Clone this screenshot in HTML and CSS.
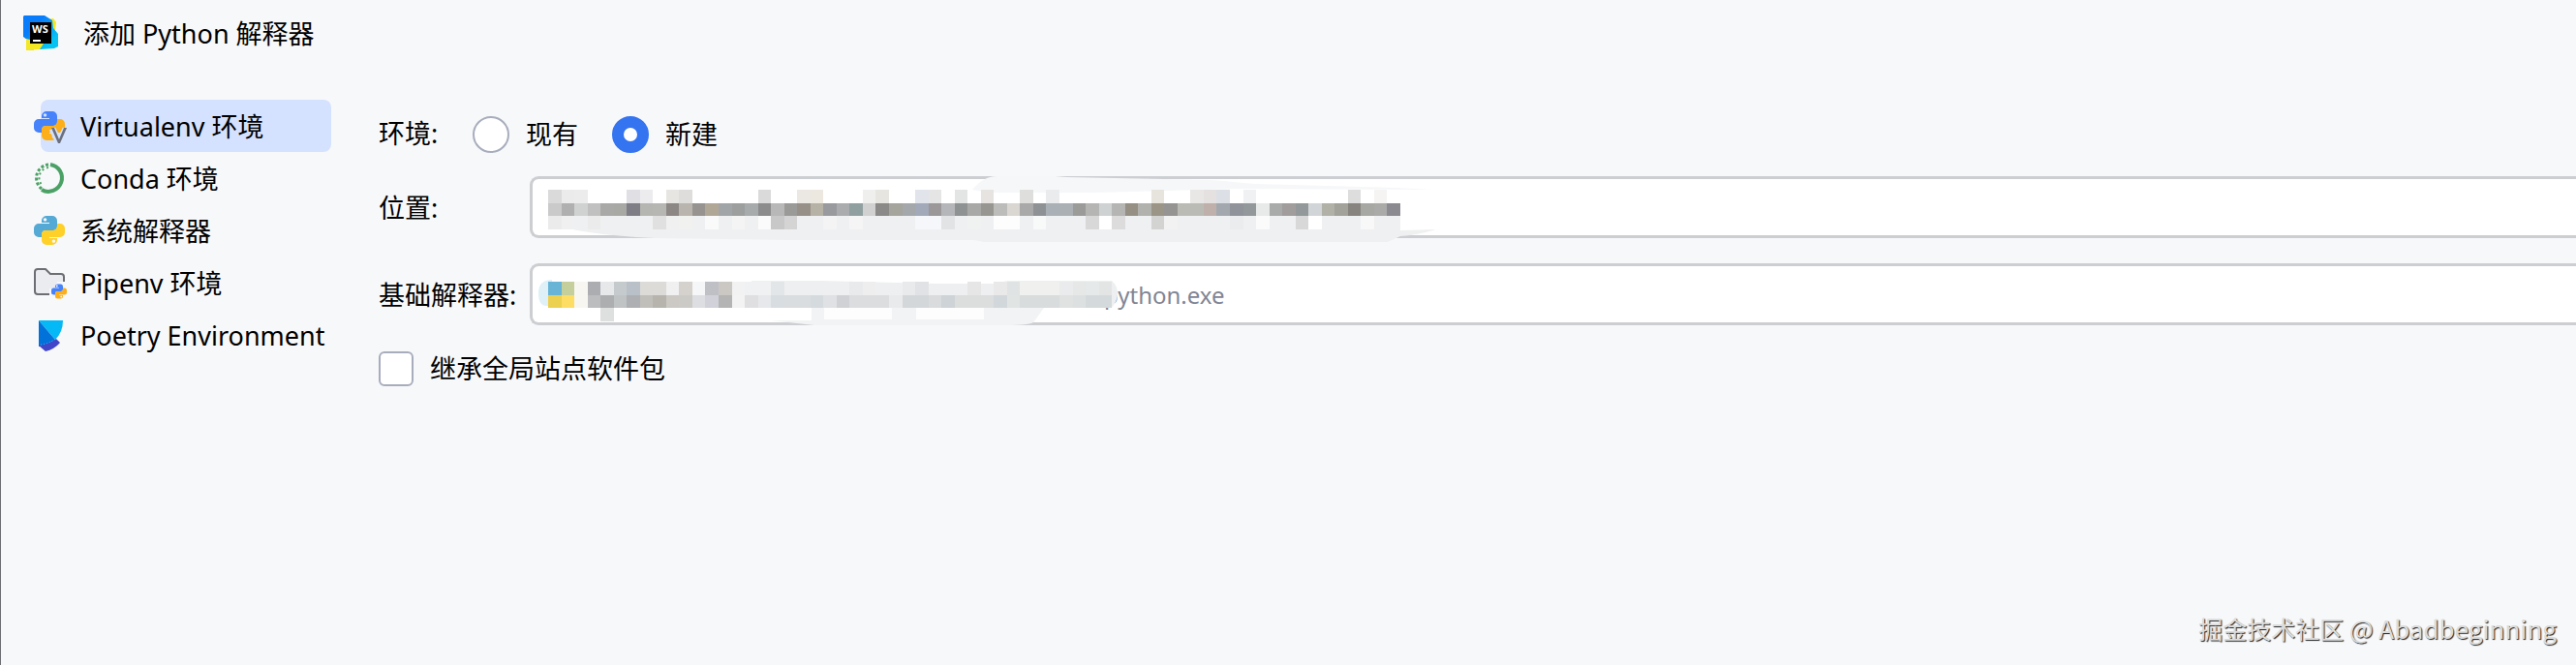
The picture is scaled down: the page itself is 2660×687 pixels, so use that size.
FILE: index.html
```
<!DOCTYPE html>
<html lang="zh-CN">
<head>
    <meta charset="UTF-8">
    <meta name="viewport" content="width=device-width, initial-scale=1.0">
    <title>添加 Python 解释器</title>
    <link rel="stylesheet" href="styles.css">
</head>
<body>
    <!-- Shared icon shapes -->
    <svg class="defs" width="0" height="0" aria-hidden="true">
        <defs>
            <path id="snake" fill-rule="evenodd" d="M8 6a5 5 0 0 1 5-5h6a5 5 0 0 1 5 5v6a4 4 0 0 1-4 4h-8a5 5 0 0 0-4 5v2H5a5 5 0 0 1-5-5v-4a5 5 0 0 1 5-5h11V8H8zM11.500 3.200a1.700 1.700 0 1 0 .1 0z"/>
        </defs>
    </svg>

    <header class="title-bar">
        <svg class="app-icon" viewBox="0 0 36 36">
            <defs>
                <linearGradient id="ws-blue" x1="0" y1="0" x2="1" y2="1">
                    <stop offset="0.3" stop-color="#087cfa"/>
                    <stop offset="0.8" stop-color="#07c3f2"/>
                </linearGradient>
            </defs>
            <path fill="#f4e724" d="M26 4l5-1 3 4-1 8-24 21H3V24l9-10z"/>
            <path fill="#d5e533" d="M3 25l8 3v8H3z"/>
            <path fill="url(#ws-blue)" d="M0 1l1-1h21l8 5 1 8 5 6v13l-4 2-15 1-5-4L0 22z"/>
            <path fill="#f4e724" d="M3 24l4 1v4h14l-4 6-14 1z"/>
            <rect x="7" y="7" width="22" height="22"/>
            <text x="9" y="18" class="ws">WS</text>
            <rect x="10" y="25" width="8" height="2" fill="#fff"/>
        </svg>
        <h1>添加 Python 解释器</h1>
    </header>

    <main class="dialog">
        <nav class="env-list">
            <a href="#virtualenv" class="env active">
                <svg viewBox="0 0 34 34">
                    <use href="#snake" fill="#4682fa"/>
                    <use href="#snake" fill="#fcaf1b" transform="rotate(180 16 16)"/>
                    <path d="M19 19l7 14 7-14" fill="none" stroke="#d4e2ff" stroke-width="7"/>
                    <path d="M18 18h3l5 12 5-12h3l-7 16h-2z" fill="#6c707e"/>
                </svg>
                Virtualenv 环境
            </a>
            <a href="#conda" class="env">
                <svg viewBox="0 0 34 34">
                    <g fill="none" stroke="#4ba165">
                        <path d="M17 2a14 14 0 1 1-9 26" stroke-width="4"/>
                        <path d="M15 2a14 14 0 0 0-7 25" stroke-width="3" stroke-dasharray="3 2"/>
                        <path d="M15 5a11 11 0 0 0-6 19" stroke-width="2" stroke-dasharray="2 3"/>
                    </g>
                </svg>
                Conda 环境
            </a>
            <a href="#system" class="env">
                <svg viewBox="0 0 34 34">
                    <use href="#snake" fill="#54a9d5"/>
                    <use href="#snake" fill="#ffd028" transform="rotate(180 16 16)"/>
                </svg>
                系统解释器
            </a>
            <a href="#pipenv" class="env">
                <svg viewBox="0 0 34 34">
                    <path d="M16 28H4a3 3 0 0 1-3-3V5a3 3 0 0 1 3-3h8l5 5h11a3 3 0 0 1 3 3v5" fill="#ebecf0" stroke="#6c6e73" stroke-width="2"/>
                    <path d="M24 15h10v19H16V22h6z" fill="#f7f8fa"/>
                    <g transform="translate(18 17) scale(.5)">
                        <use href="#snake" fill="#4682fa"/>
                        <use href="#snake" fill="#fcaf1b" transform="rotate(180 16 16)"/>
                    </g>
                </svg>
                Pipenv 环境
            </a>
            <a href="#poetry" class="env">
                <svg viewBox="0 0 34 34">
                    <path d="M5 1h25q0 12-8 20z" fill="#04b9f6"/>
                    <path d="M5 1l17 20q-7 6-17 7z" fill="#0072d9"/>
                    <path d="M5 27q10-1 18-7l4 4q-6 7-15 9z" fill="#4145c8"/>
                    <path d="M7 26q9-1 15-6" fill="none" stroke="#6fa9f0" stroke-dasharray="1 2"/>
                </svg>
                Poetry Environment
            </a>
        </nav>

        <form class="settings">
            <div class="row radios" role="radiogroup" aria-labelledby="env-label">
                <span id="env-label" class="radio-title">环境:</span>
                <label class="choice"><input type="radio" name="env" value="existing">现有</label>
                <label class="choice"><input type="radio" name="env" value="new" checked>新建</label>
            </div>
            <div class="row">
                <label for="location">位置:</label>
                <div class="field">
                    <input type="text" id="location">
                    <svg class="smudge" viewBox="0 0 920 68" aria-hidden="true">
                        <path fill="#eff0f1" d="M0 29h880v27l37-1q-20 6-37 7l-13 6H450l-10-2H250L110 64Q30 60 0 48z"/>
                        <path fill="#f6f7f8" d="M438 14q12-14 25-14h60l12 1 150 3 46 4 146 4 37 2-200-1-150 4H455z"/>
                    </svg>
                    <svg class="mosaic" id="location-mosaic" viewBox="0 0 65 3" preserveAspectRatio="none" aria-hidden="true"></svg>
                </div>
            </div>
            <div class="row">
                <label for="base">基础解释器:</label>
                <div class="field">
                    <select id="base">
                        <option>python.exe</option>
                    </select>
                    <svg class="smudge" viewBox="0 0 920 68" aria-hidden="true">
                        <path fill="#dff0f7" d="M4 17q-14 0-14 14t10 13h6z"/>
                        <path fill="#eeeff0" d="M210 18h70l120 3h60l15-3h107q6 5 6 13t-6 15H210z"/>
                        <path fill="#f2f3f4" d="M272 46h240l-10 14q-2 4-30 4H275l-45-5h42z"/>
                        <path fill="#fdfdfd" d="M285 45h70v13h-70zM380 45h70v13h-70z"/>
                    </svg>
                    <svg class="mosaic" id="base-mosaic" viewBox="0 0 65 3" preserveAspectRatio="none" aria-hidden="true"></svg>
                </div>
            </div>
            <label class="choice inherit"><input type="checkbox">继承全局站点软件包</label>
        </form>
    </main>

    <footer class="credit">掘金技术社区 <span>@ Abadbeginning</span></footer>
    <script src="script.js"></script>
</body>
</html>
```
FILE: styles.css
```
* {
    box-sizing: border-box;
}
body {
    margin: 0;
    min-height: 100vh;
    position: relative;
    overflow-x: hidden;
    background-color: #f7f8fa;
    border-left: 1px solid #6e6f73;
    font-family: "Noto Sans", "Noto Sans CJK SC", sans-serif;
    font-size: 27px;
    line-height: 36px;
    color: #000;
}
.defs {
    position: absolute;
}

/* Title bar */
.title-bar {
    display: flex;
    align-items: center;
    gap: 26px;
    height: 68px;
    padding-left: 23px;
}
.title-bar h1 {
    margin: 0;
    padding-top: 2px;
    font-size: 27px;
    font-weight: normal;
}
.app-icon {
    width: 36px;
    height: 36px;
}
.ws {
    font: bold 11px "Open Sans", sans-serif;
    fill: #fff;
}

.dialog {
    display: flex;
    padding-top: 35px;
}

/* Environment list on the left */
.env-list {
    flex: none;
    width: 390px;
    padding-left: 34px;
}
.env {
    display: flex;
    align-items: center;
    gap: 14px;
    width: 307px;
    height: 54px;
    padding-top: 2px;
    color: #000;
    text-decoration: none;
    white-space: nowrap;
}
.env svg {
    flex: none;
    width: 34px;
    height: 34px;
}
.env.active {
    position: relative;
    z-index: 0;
}
/* highlight starts a little inside the icon */
.env.active::before {
    content: '';
    position: absolute;
    z-index: -1;
    inset: 0 0 0 7px;
    border-radius: 8px;
    background-color: #d4e2ff;
}

/* Settings form */
.settings {
    flex: 1;
    min-width: 0;
}
.row {
    display: grid;
    grid-template-columns: 156px 1fr;
    align-items: center;
    height: 64px;
    margin-bottom: 26px;
}
.row > label {
    padding-top: 2px;
}
.row.radios {
    display: flex;
    height: 70px;
    margin-bottom: 9px;
}
.radio-title {
    width: 97px;
}
.choice {
    display: flex;
    align-items: center;
    gap: 17px;
    margin-right: 35px;
}
.choice input {
    appearance: none;
    width: 38px;
    height: 38px;
    margin: 0;
    border: 2px solid #a8adbd;
    border-radius: 50%;
    background-color: #fff;
}
.choice input[type="radio"]:checked {
    border: 12px solid #3574f0;
}
.choice input[type="checkbox"] {
    width: 36px;
    height: 36px;
    border-radius: 6px;
}
.inherit {
    padding-top: 1px;
}

.field {
    position: relative;
}
.field input,
.field select {
    display: block;
    appearance: none;
    width: 100%;
    height: 64px;
    border: 3px solid #cdced2;
    border-right: none;
    border-radius: 9px 0 0 9px;
    background-color: #fff;
    color: #818594;
    font-family: inherit;
    font-size: 24px;
    outline: none;
}
.field select {
    padding-left: 590px;
}

/* Masked paths */
.smudge {
    position: absolute;
    left: 19px;
    top: 0;
    width: 920px;
    height: 68px;
    overflow: visible;
    pointer-events: none;
}
.mosaic {
    position: absolute;
    left: 19px;
    top: 14px;
    width: 880px;
    height: 41px;
    shape-rendering: crispEdges;
    pointer-events: none;
}
#base-mosaic {
    top: 19px;
}

.credit {
    position: absolute;
    right: 20px;
    bottom: 20px;
    font-size: 25px;
    font-family: "Noto Sans CJK SC", sans-serif;
    color: #dcdcdc;
    text-shadow: 1px 1px 1px #222;
}
.credit span {
    font-size: 26px;
}
```
FILE: script.js
```
// One entry per column, '-' leaves the cell empty
const locationRows = [
    'dadada ebebeb ececec - - - dfdfe4 ececef - e7e5e1 dedddb - - - - - dadada - - ebe8e3 ece8e0 - - - efefed e6e5e0 - - e1e4ea e6e5e6 - e3e5e5 - e6e3e1 - - dedfdd - eaebed - - - - - - - e7e4de - - e8e7e6 e4e1e0 dcdfe5 - f0f1f2 - - - - - - - deddde - f5f4f3 -',
    'cacaca b0b0b0 d0d2d2 c0c0c0 a9a9a8 a8a8a5 7f7e86 b5b5b1 b6b7b3 8c8785 b9b5ae 979391 b1a797 a2a5a7 9c9f9e a7abac 8c8c8c b8b8b8 9a9a98 979088 b7b2a6 999a9d abacae 90a0a0 d0d1d0 8b8a88 a5a49d a5a8aa a2a9b8 9c9798 b5b6b9 8f9292 a8a8a6 989691 bcbdbb dad6d1 a9a9aa 8f9294 a9b1b6 aab0b3 9b9b99 b5b5b3 cfd2d2 b5b5b3 968f83 b1b1ad 9b9587 959493 bbbbb6 bbbbb6 bfb0ac a3a8af 90939a 93989b e8eaea a9aaaa a19d9c 93989b d2d5d8 b1b1a8 a2a19a 87847f a7a8a4 aaaba9 8b8a90',
    'ebebeb f0f0f0 - ebebeb - - - - e0e0e0 f0f0f0 f1f1ef - fafafa - f4f4f4 - fbfbfb c8c8c8 d4d4d4 - - f4f4f4 - f5f5f5 - - - - f6f7fa f6f7fa e2e3e5 - f0f1f1 - fdfdfd fdfdfd - f8f9f9 - - - d8d8d8 ffffff dcdcdc - - d3d3d1 f2f2f2 - - - - ebecee - fbfbfb - - d8d8d8 ffffff - - - f8f8f8 - -'
];
const baseRows = [
    '67b4d6 c5cf9b f8f6f0 acadb0 e6e8ea c5cacd bac0c8 dcdbd8 dcdbd8 f0f0f0 d5d2ce f5f6f8 bfc0c5 cbc8c4 f2f2f3 eff1f3 eff1f3 e3e6e9 - - - - - e9eaec eeeeee - - e9eaeb e0e2e5 - - - e6e6e6 - e8e9e8 dfe3e3 f0f0ef f0f0ef f0f0ef e9ebec e6e7e7 e6e9e9 e3e5e5',
    'ecd050 fddd63 f8f6f0 bcbdbf acaeaf bfc3c4 adafb3 c1bfba b7b4ae ccc9c4 cbcac6 dcdee2 d0d1d9 b4b4b4 f3f3f3 dfdfe1 e6e8eb d8dde1 d9dde0 d9dde0 d5dade dfe1e4 cfd1d4 dbdddf dbdddf dbdddf e9eaeb d4d7da d4d7da d9dbdd cdd3d6 dcdddd dcdddd dcdddd d1d7db e0e5e4 d8dcdc d8dcdc d8dcdc dfe2e1 dde0e0 d4dadb d4dadb',
    '- - - - dedfdf'
];

function drawMosaic(id, rows) {
    const svg = document.getElementById(id);
    rows.forEach((row, y) => {
        row.split(' ').forEach((color, x) => {
            if (color === '-') return;
            const cell = document.createElementNS('http://www.w3.org/2000/svg', 'rect');
            cell.setAttribute('x', x);
            cell.setAttribute('y', y);
            cell.setAttribute('width', 1);
            cell.setAttribute('height', 1);
            cell.setAttribute('fill', '#' + color);
            svg.appendChild(cell);
        });
    });
}

drawMosaic('location-mosaic', locationRows);
drawMosaic('base-mosaic', baseRows);
```
